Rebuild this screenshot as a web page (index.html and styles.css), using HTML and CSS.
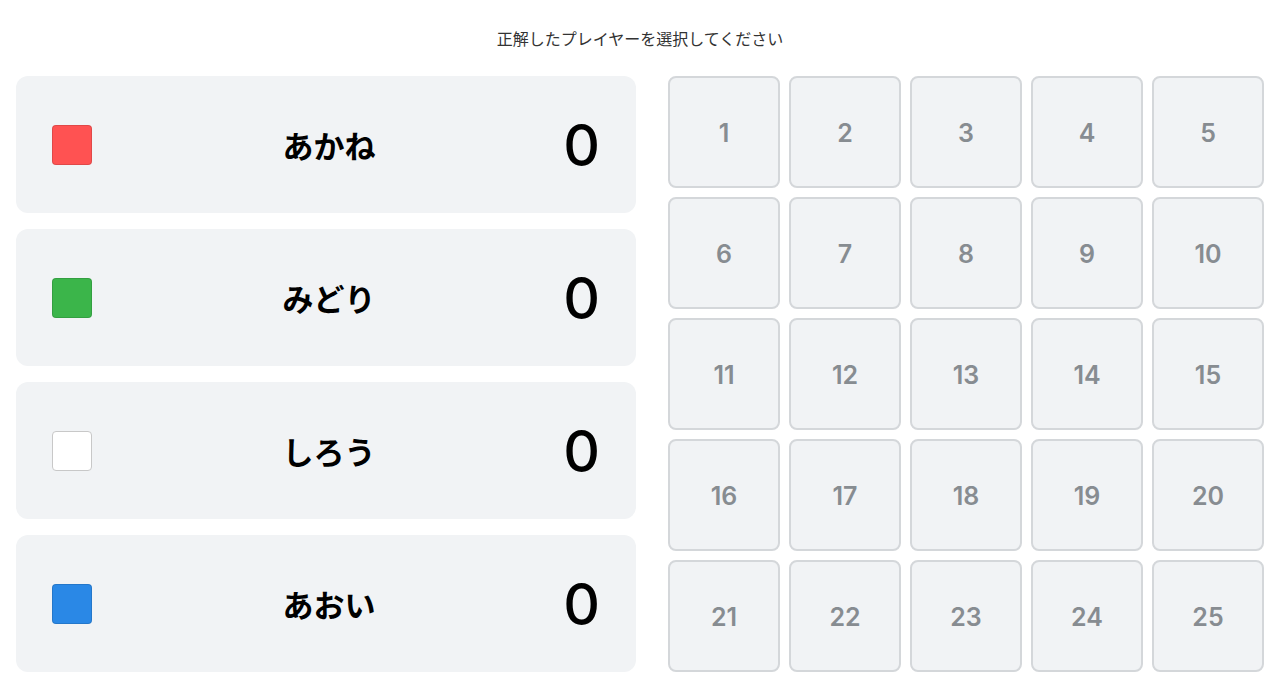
FILE: index.html
```html
<!DOCTYPE html>
<html lang="ja">
<head>
  <meta charset="UTF-8" />
  <meta name="viewport" content="width=device-width, initial-scale=1.0" />
  <title>Quiz Board</title>
  <link rel="stylesheet" href="styles.css">
</head>
<body>
  <div class="title">正解したプレイヤーを選択してください</div>

  <div class="board">
    <div class="players">
      <div class="player">
        <span class="swatch red"></span>
        <span class="name">あかね</span>
        <span class="score">0</span>
      </div>
      <div class="player">
        <span class="swatch green"></span>
        <span class="name">みどり</span>
        <span class="score">0</span>
      </div>
      <div class="player">
        <span class="swatch white"></span>
        <span class="name">しろう</span>
        <span class="score">0</span>
      </div>
      <div class="player">
        <span class="swatch blue"></span>
        <span class="name">あおい</span>
        <span class="score">0</span>
      </div>
    </div>

    <div class="panels">
      <button class="panel">1</button>
      <button class="panel">2</button>
      <button class="panel">3</button>
      <button class="panel">4</button>
      <button class="panel">5</button>
      <button class="panel">6</button>
      <button class="panel">7</button>
      <button class="panel">8</button>
      <button class="panel">9</button>
      <button class="panel">10</button>
      <button class="panel">11</button>
      <button class="panel">12</button>
      <button class="panel">13</button>
      <button class="panel">14</button>
      <button class="panel">15</button>
      <button class="panel">16</button>
      <button class="panel">17</button>
      <button class="panel">18</button>
      <button class="panel">19</button>
      <button class="panel">20</button>
      <button class="panel">21</button>
      <button class="panel">22</button>
      <button class="panel">23</button>
      <button class="panel">24</button>
      <button class="panel">25</button>
    </div>
  </div>
</body>
</html>
```

FILE: styles.css
```css
body {
  margin: 0;
  padding: 0 16px 16px;
  background: #fff;
  font-family: "Noto Sans CJK JP", "Noto Sans", sans-serif;
  color: #000;
}
.title {
  height: 76px;
  display: flex;
  align-items: center;
  justify-content: center;
  font-size: 16px;
  color: #333;
}
.board {
  display: grid;
  grid-template-columns: 620px 596px;
  gap: 32px;
  height: 596px;
}
.players {
  display: flex;
  flex-direction: column;
  gap: 16px;
}
.player {
  flex: 1;
  display: grid;
  grid-template-columns: 1fr auto 1fr;
  align-items: center;
  padding: 0 36px;
  background: #f1f3f5;
  border-radius: 12px;
}
.swatch {
  width: 38px;
  height: 38px;
  border-radius: 4px;
  border: 1px solid rgba(0, 0, 0, 0.12);
}
.red { background: #ff5252; }
.green { background: #3bb54a; }
.white { background: #fff; border-color: #c8c8c8; }
.blue { background: #2a88e6; }
.name {
  font-size: 31px;
  font-weight: bold;
  padding-left: 6px;
}
.score {
  justify-self: end;
  padding-top: 2px;
  font-family: Inter, "Noto Sans", sans-serif;
  font-size: 57px;
  font-weight: 500;
  line-height: 1;
}
.panels {
  display: grid;
  grid-template-columns: repeat(5, 112px);
  grid-template-rows: repeat(5, 112px);
  gap: 9px;
}
.panel {
  padding-top: 3px;
  background: #f1f3f5;
  border: 2px solid #d4d7da;
  border-radius: 8px;
  font-family: Inter, "Noto Sans", sans-serif;
  font-size: 25px;
  font-weight: 600;
  color: #878c91;
  cursor: pointer;
}
```
